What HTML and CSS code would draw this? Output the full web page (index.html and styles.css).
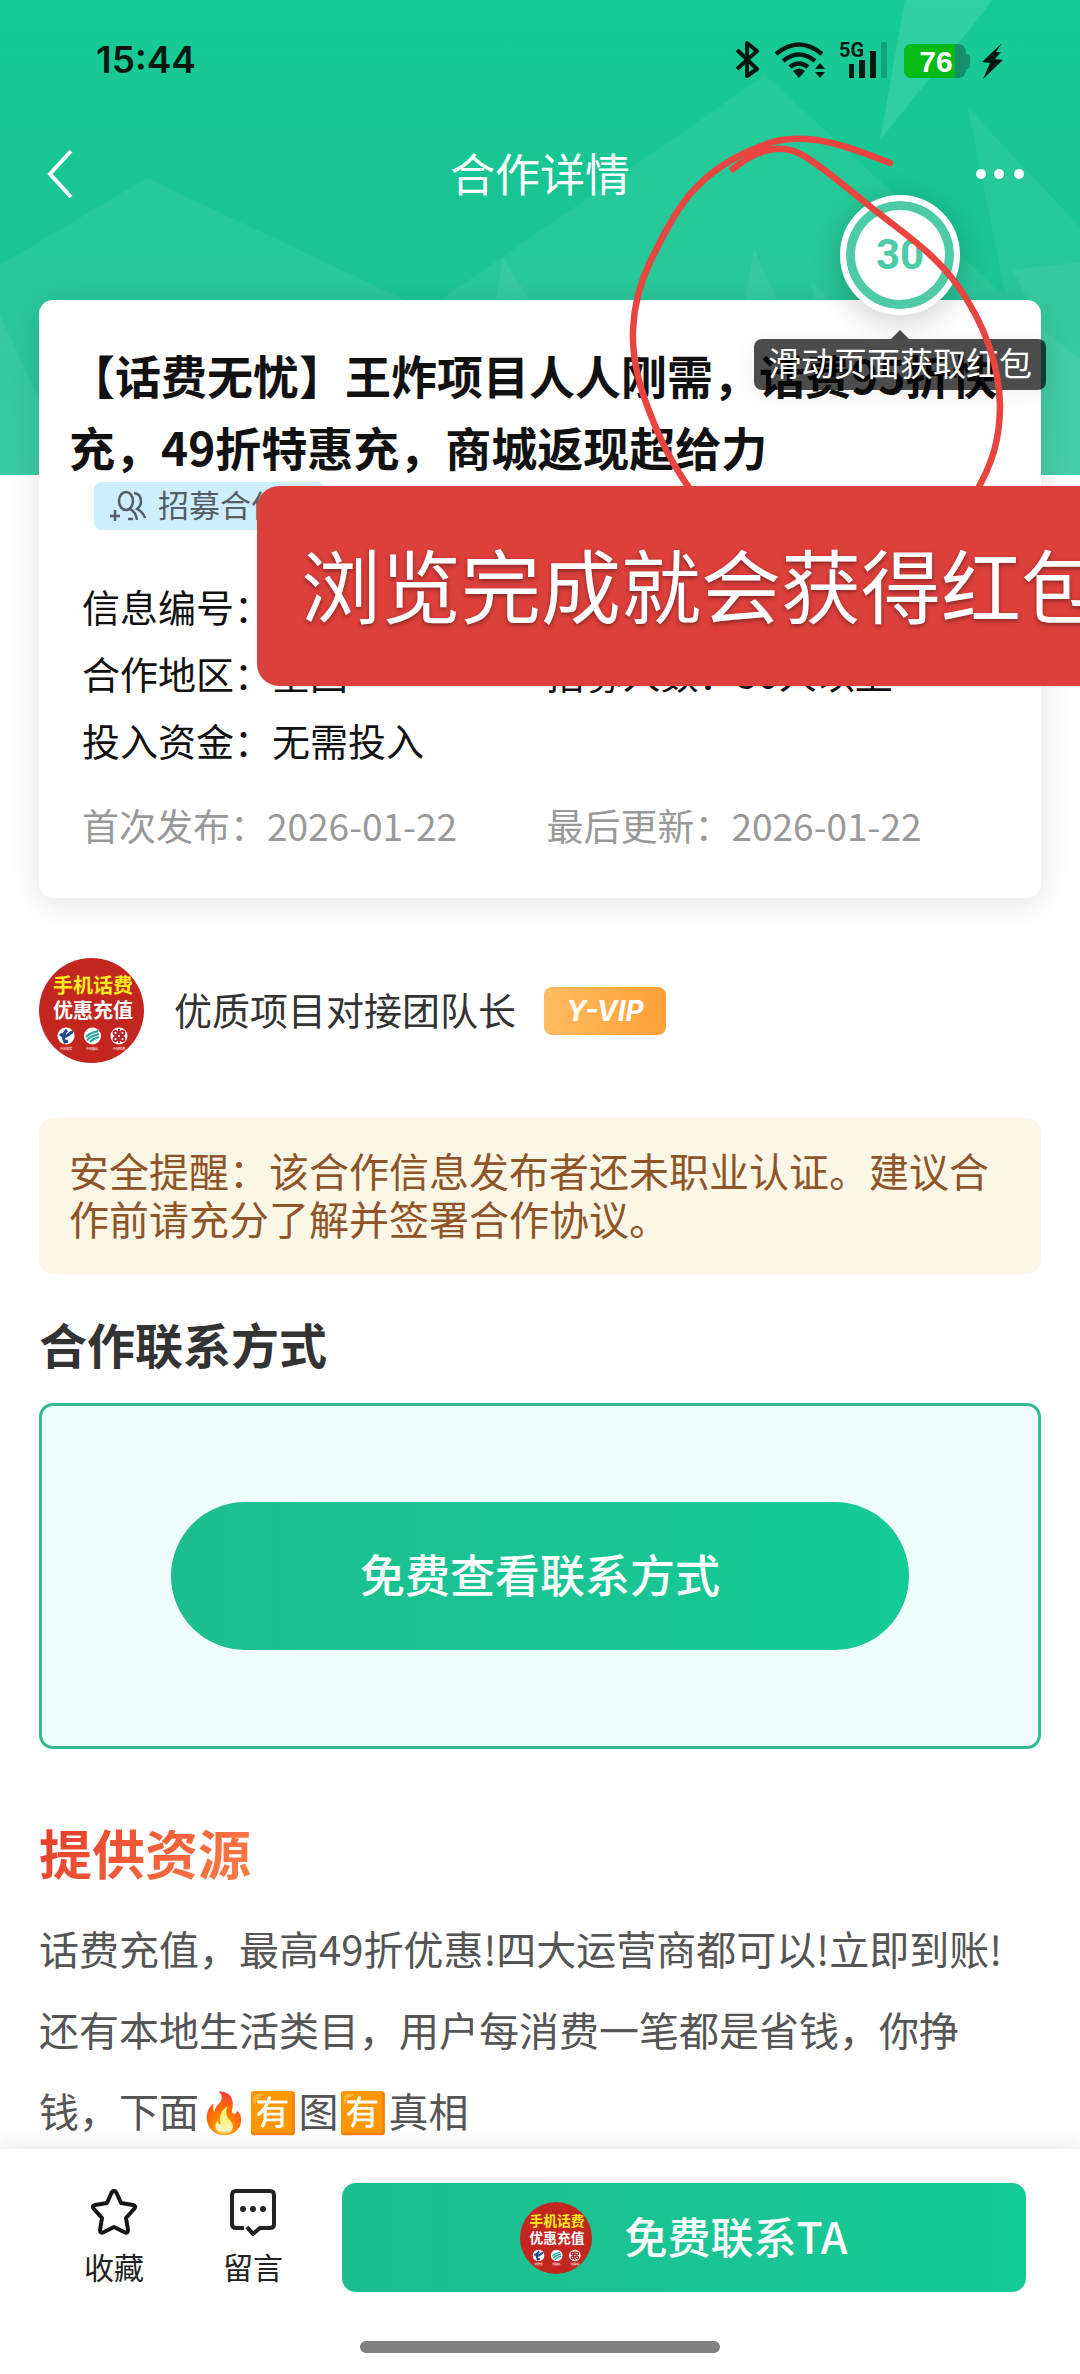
FILE: index.html
```html
<!DOCTYPE html>
<html lang="zh-CN">
<head>
    <meta charset="UTF-8">
    <meta name="viewport" content="width=device-width, initial-scale=1.0">
    <title>合作详情</title>
    <link rel="stylesheet" href="styles.css">
</head>
<body>
    <!-- 头像和运营商图标 -->
    <svg class="defs" width="0" height="0" aria-hidden="true">
        <symbol id="avatar" viewBox="0 0 105 105">
            <circle cx="52.5" cy="52.5" r="52.5" fill="#c3261f"/>
            <text x="54" y="35" class="avatar-text" fill="#ffee1a">手机话费</text>
            <text x="54" y="60" class="avatar-text" fill="#fff">优惠充值</text>
            <circle cx="27" cy="78" r="8.5" fill="#fff"/>
            <circle cx="53.5" cy="78" r="8.5" fill="#fff"/>
            <circle cx="80" cy="78" r="8.5" fill="#fff"/>
            <path d="M21 76Q26 80 29 77T34 74M28 72Q22 77 26 84L29 83" fill="none" stroke="#1b4a8a" stroke-width="3"/>
            <path d="M47 79Q50 76 53 75T59 73M48 82Q51 79 54 78T60 76M51 84Q53 82 55 81T60 79" fill="none" stroke="#2aa79a" stroke-width="2"/>
            <g fill="none" stroke="#b5242b" stroke-width="1.8">
                <circle cx="76.5" cy="75" r="2"/>
                <circle cx="83.5" cy="75" r="2"/>
                <circle cx="80" cy="78" r="2"/>
                <circle cx="76.5" cy="81" r="2"/>
                <circle cx="83.5" cy="81" r="2"/>
                <path d="M80 71v4M80 81v4"/>
            </g>
            <text x="27" y="92" class="avatar-tiny">中国电信</text>
            <text x="53" y="92" class="avatar-tiny">中国移动</text>
            <text x="80" y="92" class="avatar-tiny">中国联通</text>
        </symbol>
    </svg>

    <div class="page">
        <header class="header">
            <svg class="header-bg" viewBox="0 0 1080 475" preserveAspectRatio="none" aria-hidden="true">
                <g fill="#fff" fill-opacity="0.06">
                    <path d="M0 265L147 178L405 300L640 475H0z"/>
                    <path d="M765 75L1006 297L1080 360V475H320L440 300z"/>
                    <path d="M905 0H993L880 140z" fill-opacity="0.11"/>
                    <path d="M968 108L1080 227V475H1030L1006 297z"/>
                    <path d="M1013 270L1080 262V475H1041V330z"/>
                    <path d="M503 258L530 300H496zM754 248L777 300H745zM811 282L830 300H815z"/>
                    <path d="M0 315L39 400V475H0z"/>
                </g>
            </svg>
            <div class="status-bar">
                <span class="clock">15:44</span>
                <svg class="status-icons" width="270" height="44" viewBox="734 38 270 44" aria-hidden="true">
                    <path d="M737 50L757 69L747 76V43L757 51L737 69" fill="none" stroke="#03190f" stroke-width="4" stroke-linejoin="round"/>
                    <g fill="none" stroke="#03190f" stroke-width="4.5">
                        <path d="M776 54Q799 35 822 54"/>
                        <path d="M783 61Q799 48 815 61"/>
                        <path d="M790 67Q799 60 808 67"/>
                    </g>
                    <path d="M793 71Q799 66 805 71L799 78z" fill="#03190f"/>
                    <path d="M815 69L820 63L825 69zM815 72H825L820 78z" fill="#03190f"/>
                    <text x="839" y="57" class="net">5G</text>
                    <path d="M849 64h5v14h-5zM859 60h6v18h-6zM870 51h6v27h-6z" fill="#03190f"/>
                    <path d="M881 42h6v36h-6z" fill="#12a379"/>
                    <path d="M965 54h2q3 0 3 4v7q0 4-3 4h-2z" fill="#15906c"/>
                    <rect x="904" y="44" width="62" height="34" rx="8" fill="#15906c"/>
                    <path d="M955 44V78H912Q904 78 904 70V52Q904 44 912 44z" fill="#07bb15"/>
                    <text x="936" y="72" class="battery">76</text>
                    <path d="M1002 43L982 62L990 63L983 79L1003 60L995 59L1001 52H996z" fill="#03190f"/>
                </svg>
            </div>
            <nav class="nav">
                <a href="#" class="back" aria-label="返回">
                    <svg width="28" height="52" viewBox="0 0 28 52"><path d="M25 3L4 26L25 49" fill="none" stroke="#fff" stroke-width="4"/></svg>
                </a>
                <h1>合作详情</h1>
                <button class="more" type="button" aria-label="更多">
                    <svg width="48" height="12" viewBox="0 0 48 12" fill="#fff"><circle cx="5" cy="6" r="5"/><circle cx="23" cy="6" r="5"/><circle cx="43" cy="6" r="5"/></svg>
                </button>
            </nav>
        </header>

        <main class="content">
            <section class="card">
                <h2 class="title">【话费无忧】王炸项目人人刚需，话费95折快充，49折特惠充，商城返现超给力</h2>
                <div class="tag">
                    <svg width="36" height="32" viewBox="0 0 36 32" fill="none" stroke="#555d63" stroke-width="2.5">
                        <ellipse cx="16" cy="11" rx="7" ry="9"/>
                        <path d="M20 19Q26 22 27 30M24 3Q31 4 31 11Q31 16 27 19Q33 22 35 28M5 20v11M0 26h10M18 29h5"/>
                    </svg>
                    <span>招募合伙人</span>
                </div>
                <div class="info">
                    <div>信息编号：</div>
                    <div></div>
                    <div>合作地区：全国</div>
                    <div>招募人数：50人以上</div>
                    <div>投入资金：无需投入</div>
                </div>
                <div class="dates">
                    <div>首次发布：2026-01-22</div>
                    <div>最后更新：2026-01-22</div>
                </div>
            </section>

            <section class="publisher">
                <svg class="avatar"><use href="#avatar"/></svg>
                <span class="name">优质项目对接团队长</span>
                <span class="vip">Y-VIP</span>
            </section>

            <p class="tip">安全提醒：该合作信息发布者还未职业认证。建议合作前请充分了解并签署合作协议。</p>

            <h2 class="contact-title">合作联系方式</h2>
            <div class="contact-box">
                <button class="contact-btn" type="button">免费查看联系方式</button>
            </div>

            <h2 class="res-title">提供资源</h2>
            <p class="res-text">话费充值，最高49折优惠!四大运营商都可以!立即到账!还有本地生活类目，用户每消费一笔都是省钱，你挣钱，下面<span class="emoji">🔥🈶</span>图<span class="emoji">🈶</span>真相</p>
        </main>

        <!-- 底部操作栏 -->
        <footer class="bottom-bar">
            <div class="actions">
                <button class="action" type="button">
                    <svg width="48" height="48" viewBox="0 0 48 48" fill="none" stroke="#151515" stroke-width="4" stroke-linejoin="round"><path d="M24 3Q26 3 27 6L31 15L43 17Q47 18 44 21L36 30L38 42Q38 46 34 44L24 39L14 44Q10 46 10 42L12 30L4 21Q1 18 5 17L17 15L21 6Q22 3 24 3z"/></svg>
                    <span>收藏</span>
                </button>
                <button class="action" type="button">
                    <svg width="48" height="48" viewBox="0 0 48 48" fill="none" stroke="#222" stroke-width="4"><path d="M15 40H7Q3 40 3 36V7Q3 3 7 3H41Q45 3 45 7V36Q45 40 41 40H31L24 46L18 39"/><path d="M14 21h0M24 21h0M34 21h0" stroke-width="6" stroke-linecap="round"/></svg>
                    <span>留言</span>
                </button>
                <button class="call-btn" type="button">
                    <svg class="avatar-small"><use href="#avatar"/></svg>
                    <span>免费联系TA</span>
                </button>
            </div>
            <div class="home-line"></div>
        </footer>

        <!-- 浮层：倒计时、提示和标注 -->
        <div class="reward">
            <div class="timer">30</div>
            <div class="bubble">滑动页面获取红包</div>
        </div>
        <svg class="scribble" width="390" height="370" viewBox="620 130 390 370" fill="none" stroke="#e84440" stroke-width="6.5" stroke-linecap="round" stroke-linejoin="round" aria-hidden="true">
            <path d="M890 163C870 155 850 147 832 143C806 137 784 137 764 145C733 156 709 172 690 194C673 215 662 238 650 262C640 283 634 304 633 330C632 358 638 382 648 408C660 440 672 464 692 492M976 492C992 464 1000 440 1000 405C999 363 983 322 958 286C935 254 906 235 881 215C855 195 832 174 806 157C792 148 778 147 765 151C751 155 741 162 733 169"/>
        </svg>
        <div class="sticker">浏览完成就会获得红包</div>
    </div>
</body>
</html>
```
FILE: styles.css
```css
* {
    box-sizing: border-box;
}
body {
    margin: 0;
    background: #fff;
    color: #111;
    font-family: "Noto Sans CJK SC", "Noto Sans", sans-serif;
}
h1, h2, p {
    margin: 0;
}
button {
    border: none;
    background: none;
    padding: 0;
    font-family: inherit;
    color: inherit;
    cursor: pointer;
}
svg {
    display: block;
}
.defs {
    position: absolute;
}
.page {
    position: relative;
    min-height: 100vh;
    overflow: hidden;
}

/* 顶部 */
.header {
    position: relative;
    height: 475px;
    background: linear-gradient(#17cb96, #19c592 45%, #22c495);
}
.header-bg {
    position: absolute;
    top: 0;
    left: 0;
    width: 100%;
    height: 100%;
}
.status-bar {
    position: relative;
    display: flex;
    justify-content: space-between;
    align-items: center;
    height: 120px;
    padding: 0 76px 0 96px;
}
.clock {
    font: 600 37px/48px Inter, sans-serif;
    color: #03190f;
}
.net {
    font: 700 20px "Roboto", sans-serif;
    fill: #03190f;
}
.battery {
    font: 700 30px "Liberation Sans", sans-serif;
    fill: #fff;
    text-anchor: middle;
}
.nav {
    position: relative;
    display: grid;
    grid-template-columns: 1fr auto 1fr;
    align-items: center;
    height: 108px;
    padding: 0 46px;
}
.nav h1 {
    padding-bottom: 4px;
    font-size: 45px;
    font-weight: 400;
    color: #fff;
}
.more {
    justify-self: end;
    margin-right: 10px;
}

/* 内容 */
.content {
    position: relative;
    margin-top: -175px;
    padding: 0 39px 220px;
}
.card {
    height: 598px;
    padding: 38px 30px;
    background: #fff;
    border-radius: 14px;
    box-shadow: 0 4px 30px rgba(0, 0, 0, 0.12);
}
.title {
    font-size: 46px;
    line-height: 72px;
    font-weight: 700;
}
.tag {
    display: flex;
    align-items: center;
    gap: 12px;
    width: fit-content;
    height: 48px;
    margin-left: 25px;
    padding: 0 12px 0 16px;
    background: #cdeeff;
    border-radius: 8px;
    font-size: 31px;
    line-height: 44px;
    color: #555d63;
}
.tag span {
    padding-bottom: 4px;
}
.info, .dates {
    display: grid;
    grid-template-columns: 1fr 1fr;
    padding-left: 13px;
}
.info {
    margin-top: 42px;
    font-size: 38px;
    line-height: 67px;
}
.dates {
    margin-top: 24px;
    font-size: 37px;
    line-height: 56px;
    color: #999;
}
.publisher {
    display: flex;
    align-items: center;
    margin-top: 60px;
}
.avatar {
    width: 105px;
    height: 105px;
}
.avatar-text {
    font-size: 20px;
    font-weight: 700;
    text-anchor: middle;
}
.avatar-tiny {
    font-size: 3px;
    fill: #fff;
    text-anchor: middle;
}
.name {
    margin: 0 28px 0 30px;
    padding-bottom: 4px;
    font-size: 38px;
    color: #333;
}
.vip {
    width: 122px;
    height: 48px;
    border-radius: 8px;
    background: linear-gradient(100deg, #ffbd62, #ff9f36);
    font: italic 700 28px/48px Inter, sans-serif;
    text-align: center;
    color: #fff;
}
.tip {
    margin-top: 55px;
    padding: 28px 30px 32px;
    border-radius: 14px;
    background: #faf7e7;
    font-size: 40px;
    line-height: 48px;
    color: #8f5427;
}
.contact-title {
    margin-top: 33px;
    font-size: 48px;
    line-height: 72px;
    color: #333;
}
.contact-box {
    display: flex;
    justify-content: center;
    margin-top: 24px;
    padding: 96px 0;
    border: 3px solid #30bb92;
    border-radius: 14px;
    background: #eefcfa;
}
.contact-btn {
    width: 74%;
    height: 148px;
    padding-bottom: 6px;
    border-radius: 74px;
    background: linear-gradient(90deg, #1dbe8e, #15cb96);
    font-size: 45px;
    font-weight: 500;
    color: #fff;
}
.res-title {
    width: fit-content;
    margin-top: 67px;
    font-size: 53px;
    line-height: 72px;
    background: linear-gradient(135deg, #e5402c 10%, #ff8148);
    -webkit-background-clip: text;
    background-clip: text;
    color: transparent;
}
.res-text {
    margin-top: 20px;
    padding-right: 10px;
    font-size: 40px;
    line-height: 81px;
    color: #555;
}
.emoji {
    font-family: "Noto Color Emoji", sans-serif;
    line-height: 1;
}

/* 底部 */
.bottom-bar {
    position: absolute;
    left: 0;
    right: 0;
    bottom: 0;
    height: 225px;
    padding-top: 34px;
    background: #fff;
    box-shadow: 0 0 24px rgba(0, 0, 0, 0.12);
}
.actions {
    display: flex;
    align-items: center;
    padding: 0 54px 0 64px;
}
.action {
    display: flex;
    flex-direction: column;
    align-items: center;
    gap: 9px;
    width: 100px;
    margin-right: 39px;
    font-size: 30px;
    line-height: 42px;
    color: #222;
}
.call-btn {
    flex: 1;
    display: flex;
    justify-content: center;
    align-items: center;
    gap: 32px;
    height: 109px;
    border-radius: 14px;
    background: linear-gradient(90deg, #1dbe8e, #15cb96);
    font-size: 43px;
    font-weight: 500;
    color: #fff;
}
.call-btn span {
    padding-bottom: 6px;
}
.avatar-small {
    width: 72px;
    height: 72px;
}
.home-line {
    width: 360px;
    height: 12px;
    margin: 49px auto 0;
    border-radius: 6px;
    background: #808080;
}

/* 浮层 */
.reward {
    position: absolute;
    top: 195px;
    right: 34px;
    width: 292px;
}
.timer {
    width: 120px;
    height: 120px;
    margin: 0 auto 24px;
    border: 6px solid #fff;
    border-radius: 50%;
    background: #fff;
    box-shadow: inset 0 0 0 9px #4ccba6, 0 6px 30px rgba(0, 0, 0, 0.2);
    font: 700 42px/108px "Roboto", sans-serif;
    text-align: center;
    color: #4ccba6;
}
.bubble {
    position: relative;
    padding-bottom: 4px;
    border-radius: 8px;
    background: rgba(0, 0, 0, 0.7);
    box-shadow: 0 4px 24px rgba(0, 0, 0, 0.06);
    font-size: 33px;
    line-height: 47px;
    text-align: center;
    white-space: nowrap;
    color: #fff;
}
.bubble::before {
    content: "";
    position: absolute;
    top: -9px;
    left: 50%;
    margin-left: -9px;
    border: 9px solid transparent;
    border-top: none;
    border-bottom-color: rgba(0, 0, 0, 0.7);
}
.scribble {
    position: absolute;
    top: 130px;
    right: 70px;
}
.sticker {
    position: absolute;
    top: 486px;
    left: 257px;
    right: 0;
    height: 200px;
    padding-left: 44px;
    border-radius: 22px 0 0 22px;
    background: #dd3f3b;
    font-size: 80px;
    line-height: 192px;
    white-space: nowrap;
    overflow: hidden;
    text-shadow: 0 2px 4px rgba(0, 0, 0, 0.4);
    color: #fff;
}
```
